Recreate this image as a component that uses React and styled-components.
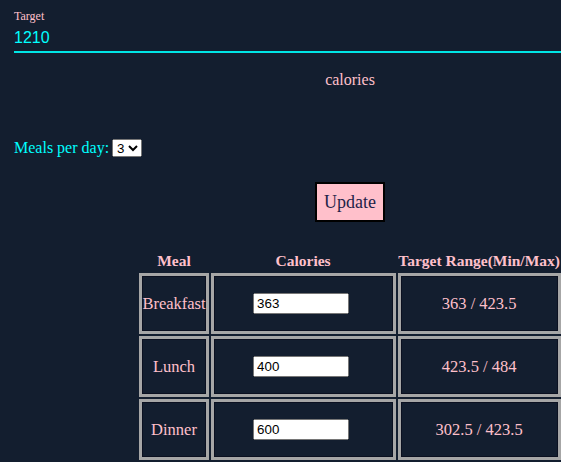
import styled, { createGlobalStyle } from "styled-components";

const GlobalStyle = createGlobalStyle`
  html, body {
    margin: 0;
    background: #131e2f;
    overflow: hidden;
  }
  body {
    font-family: "Liberation Serif", "Times New Roman", serif;
    color: #ffc0cb;
  }
`;

const Page = styled.div`
  width: 700px;
  padding-top: 9px;
`;

const Field = styled.div`
  margin-left: 14px;
  border-bottom: 2px solid #00e5e5;
  padding-bottom: 4px;
`;

const FieldLabel = styled.label`
  display: block;
  font-size: 12px;
  line-height: 14px;
  color: #ffc0cb;
`;

const FieldValue = styled.div`
  margin-top: 5px;
  font-family: "Liberation Sans", Arial, sans-serif;
  font-size: 16px;
  line-height: 19px;
  color: #00ffff;
`;

const Unit = styled.p`
  margin: 18px 0 0;
  text-align: center;
  font-size: 16px;
  line-height: 18px;
`;

const MealsRow = styled.div`
  margin: 49px 0 0 14px;
  display: flex;
  align-items: center;
  gap: 3px;
  font-size: 16px;
  color: #00ffff;
  height: 20px;
`;

const Select = styled.select`
  font-family: "Liberation Sans", Arial, sans-serif;
  font-size: 13.33px;
  height: 18px;
`;

const ButtonRow = styled.div`
  margin-top: 24px;
  display: flex;
  justify-content: center;
`;

const UpdateButton = styled.button`
  font-family: "Liberation Serif", serif;
  font-size: 18px;
  line-height: 21px;
  padding: 8px 7px 7px;
  background: #ffc0cb;
  color: #1d2348;
  border: 2px solid #000;
  border-radius: 0;
`;

const Table = styled.table`
  margin: 27px auto 0;
  border-collapse: separate;
  border-spacing: 2px;
`;

const Head = styled.th`
  font-size: 15.5px;
  font-weight: bold;
  padding: 1px 0;
  color: #ffc0cb;
  white-space: nowrap;
`;

const Cell = styled.td`
  box-sizing: border-box;
  width: ${(p) => p.$w}px;
  height: 61px;
  padding: 0;
  text-align: center;
  font-size: 16.5px;
  color: #ffc0cb;
  border: 3px solid #a6a6a6;
  box-shadow: inset 0 0 0 1px #0b1020;
`;

const CalInput = styled.input`
  box-sizing: border-box;
  width: 96px;
  height: 21px;
  margin-right: 4px;
  font-family: "Liberation Sans", Arial, sans-serif;
  font-size: 13.33px;
`;

const meals = [
  { name: "Breakfast", cal: "363", range: "363 / 423.5" },
  { name: "Lunch", cal: "400", range: "423.5 / 484" },
  { name: "Dinner", cal: "600", range: "302.5 / 423.5" },
];

export default function App() {
  return (
    <Page>
      <GlobalStyle />
      <Field>
        <FieldLabel>Target</FieldLabel>
        <FieldValue>1210</FieldValue>
      </Field>
      <Unit>calories</Unit>
      <MealsRow>
        Meals per day:
        <Select defaultValue="3">
          <option>1</option>
          <option>2</option>
          <option>3</option>
          <option>4</option>
        </Select>
      </MealsRow>
      <ButtonRow>
        <UpdateButton>Update</UpdateButton>
      </ButtonRow>
      <Table>
        <thead>
          <tr>
            <Head>Meal</Head>
            <Head>Calories</Head>
            <Head>Target Range(Min/Max)</Head>
          </tr>
        </thead>
        <tbody>
          {meals.map((m) => (
            <tr key={m.name}>
              <Cell $w={69}>{m.name}</Cell>
              <Cell $w={185}>
                <CalInput defaultValue={m.cal} />
              </Cell>
              <Cell $w={163}>{m.range}</Cell>
            </tr>
          ))}
        </tbody>
      </Table>
    </Page>
  );
}
